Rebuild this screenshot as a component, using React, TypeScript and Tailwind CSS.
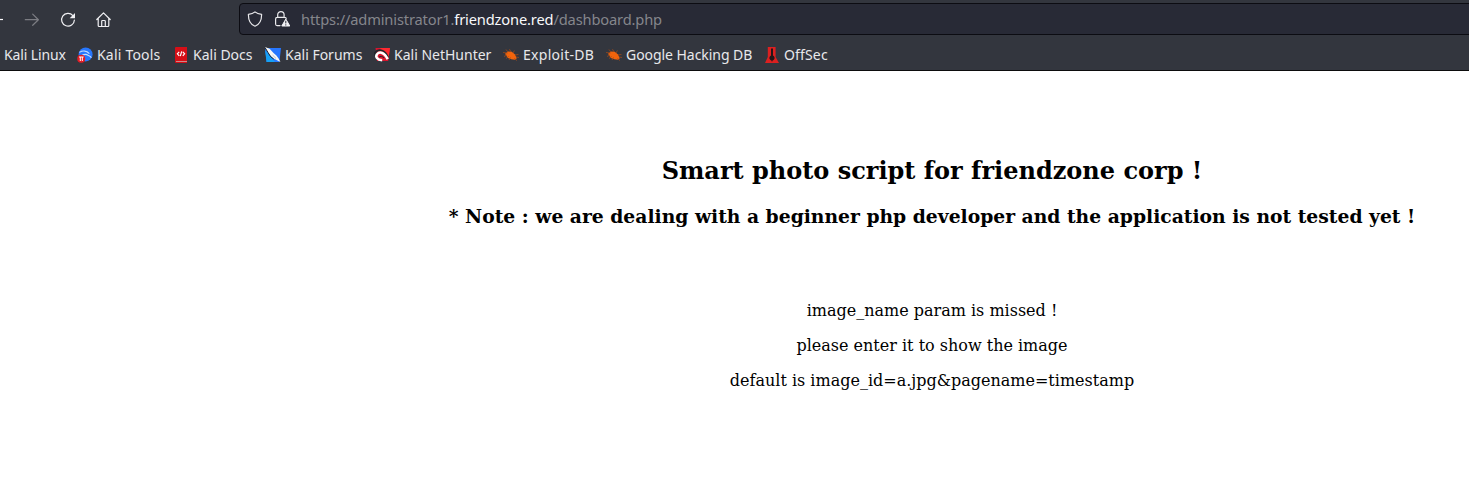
import type { ReactNode } from "react";

function ToolsIcon() {
  return (
    <svg width="16" height="16" viewBox="0 0 16 16">
      <circle cx="8.6" cy="7.4" r="7" fill="#2777ff" />
      <path d="M2.4 5.4C5.5 3.4 9.6 3.6 12.4 6.6M5 8.2c2.4-1 4.6-1 6 0 1.6.6 2.8 1.4 3.4 2.6" fill="none" stroke="#c4dcff" strokeWidth="1.1" />
      <circle cx="4.2" cy="11.8" r="4" fill="#e31c25" />
      <path d="M2 10h4.6M3.3 10v4M5.3 10v4" stroke="#fff" strokeWidth="1" />
    </svg>
  );
}

function DocsIcon() {
  return (
    <svg width="16" height="16" viewBox="0 0 16 16">
      <path d="M2 1Q2 0 3 0H14v16H3Q2 16 2 15Z" fill="#d60f17" />
      <path d="M3 14.5h11" stroke="#c98a8a" strokeWidth="1" />
      <path d="M6.2 4.8 4.4 6.8l1.8 2M9.8 4.8l1.8 2-1.8 2M8.7 4.4 7.3 9.2" fill="none" stroke="#fff" strokeWidth="1.2" />
    </svg>
  );
}

function ForumsIcon() {
  return (
    <svg width="16" height="16" viewBox="0 0 16 16">
      <path d="M0 1h16l-1.6 14H1.6Z" fill="#2777ff" />
      <path d="M0 3 10 15H1.6Z" fill="#16a0f4" />
      <path d="M0 0 4.6 1.8 8.8 6.3l2.6 2.1 2.2 3 1.9 3.6-4-2.1-3.8-1.8-2.9-3L1.8 4Z" fill="#f7f7f5" />
      <path d="m0 .5 3 5 2.5 4 3.2 2.5" fill="none" stroke="#17202d" strokeWidth="1" />
      <path d="m7.5 8 3.5 3.4" stroke="#9ca7b8" strokeWidth=".7" />
    </svg>
  );
}

function NetHunterIcon() {
  return (
    <svg width="16" height="16" viewBox="0 0 16 16">
      <path d="M1.5 1H16l-1.8 13H3Z" fill="#d6162f" />
      <path d="M6 1h10l-1.7 11Z" fill="#ff2930" />
      <path d="M0 8.5C1 4 4.5 2.3 8 3.5c2.8 1 4.7 3.4 6 6.6" fill="none" stroke="#20262c" strokeWidth="1.8" />
      <path d="M8.2 13.2C3 12.9 1.2 9.6 3 7.2 5.4 4.4 10.6 5 13.6 12.2" fill="none" stroke="#fff" strokeWidth="2.5" />
      <path d="M5 10.2c1-1.4 3.7-1 5 .8" fill="none" stroke="#20262c" strokeWidth="1" />
    </svg>
  );
}

function ExploitIcon() {
  return (
    <svg width="16" height="16" viewBox="0 0 16 16">
      <path d="M2 6.8 5 4.4l3.8.4 3.2 2.6 1.8 3.8-1.8 1.6-3.7-.6-3.4-1.2Z" fill="#f2640c" />
      <path d="M4.5 6 0 5.5m4 2.5L1 9.5m4.6 0L3 11.5m4.5-1L6 13M5 5 3 2.5M8 5 6.5 2.2M10 6l1.4-2.5M12 8l3.5-.6M13 10l3 .5M11.5 11.5 14 13.6" fill="none" stroke="#9c491b" strokeWidth=".8" />
    </svg>
  );
}

function OffSecIcon() {
  return (
    <svg width="16" height="16" viewBox="0 0 16 16">
      <path d="M3.8 0h7.8v10L15 16H1l2.8-6Z" fill="#dc2020" />
      <path d="M7 1.5h2v7a2.6 2.6 0 1 1-2 0Z" fill="#241719" />
      <path d="M8 11v3.4" stroke="#241719" strokeWidth="1" />
    </svg>
  );
}

const bookmarks: { label: string; icon: ReactNode; layout: string }[] = [
  { label: "Kali Tools", icon: <ToolsIcon />, layout: "w-[96px] tracking-[0.2px]" },
  { label: "Kali Docs", icon: <DocsIcon />, layout: "w-[92px]" },
  { label: "Kali Forums", icon: <ForumsIcon />, layout: "w-[109px]" },
  { label: "Kali NetHunter", icon: <NetHunterIcon />, layout: "w-[129px]" },
  { label: "Exploit-DB", icon: <ExploitIcon />, layout: "w-[103px] tracking-[0.28px]" },
  { label: "Google Hacking DB", icon: <ExploitIcon />, layout: "w-[158px] tracking-[-0.05px]" },
  { label: "OffSec", icon: <OffSecIcon />, layout: "w-[80px] tracking-[0.15px]" },
];

function NavigationBar() {
  return (
    <div className="flex h-[39px] pt-[3px]">
      <div className="flex w-[239px] shrink-0 pt-[9px]">
        <svg width="4" height="16" viewBox="0 0 4 16">
          <path d="M0 7.5h3" stroke="#fbfbfe" strokeWidth="1.2" />
        </svg>
        <svg className="ml-5" width="16" height="16" viewBox="0 0 16 16" fill="none" stroke="#7c7d83" strokeWidth="1.2" strokeLinecap="round" strokeLinejoin="round">
          <path d="M1.3 7.7h13M8.7 2.1l5.7 5.6-5.7 5.6" />
        </svg>
        <svg className="ml-5" width="16" height="16" viewBox="0 0 16 16">
          <path d="M12.9 3.6A6.4 6.4 0 1 0 14.4 8" fill="none" stroke="#f0f0f3" strokeWidth="1.2" strokeLinecap="round" />
          <path d="M15 1v5.2H9.7Z" fill="#f0f0f3" />
        </svg>
        <svg className="ml-5" width="16" height="16" viewBox="0 0 16 16" fill="none" stroke="#f0f0f3" strokeWidth="1.2" strokeLinecap="round" strokeLinejoin="round">
          <path d="M.8 7.5 7.5.8l6.7 6.7M2.2 6.5v7.1q0 .9.9.9h8.8q.9 0 .9-.9V6.5M5.7 14.4V9.3q0-.8.8-.8h2q.8 0 .8.8v5.1" />
        </svg>
      </div>
      <div className="flex h-8 w-[1300px] shrink-0 items-center rounded-[4px] border border-[#0c0c12] bg-[#282a36] pl-[7px]">
        <svg width="16" height="16" viewBox="0 0 16 16">
          <path d="M8 .9c1.8 1.5 4 2.1 6.6 2.4C14.7 8.9 12.8 13.4 8 15.2 3.2 13.4 1.3 8.9 1.4 3.3 4 3 6.2 2.4 8 .9Z" fill="none" stroke="#e9e9ec" strokeWidth="1.2" strokeLinejoin="round" />
        </svg>
        <svg className="ml-3" width="16" height="16" viewBox="0 0 16 16">
          <path d="M2.7 6.4V3.8a3.2 3.2 0 0 1 6.4 0v2.6M5 14.6H2.1Q.6 14.6.6 13.1V8q0-1.6 1.6-1.6h7.4Q11.2 6.4 11.2 7.6" fill="none" stroke="#e9e9ec" strokeWidth="1.2" strokeLinecap="round" />
          <path d="M10.8 8.1 14.8 15H6.8Z" fill="#f3f3f6" stroke="#f3f3f6" strokeLinejoin="round" />
          <path d="M10.8 9.8v2.6m0 .9v1.2" stroke="#282a36" strokeWidth="1" />
        </svg>
        <span className="ml-[10px] whitespace-pre text-[14.67px] leading-5 tracking-[-0.155px] text-[#85868c]">
          https://administrator1.<span className="text-[#f8f8fb]">friendzone.red</span>/dashboard.php
        </span>
      </div>
    </div>
  );
}

export default function App() {
  return (
    <div className="h-[486px] w-full overflow-hidden bg-white">
      <header className="h-[71px] border-b border-[#0c0c0d] bg-[#33363e] font-['Noto_Sans',sans-serif]">
        <NavigationBar />
        <nav className="flex h-[31px] items-center whitespace-nowrap text-[14px] leading-5 text-[#e8e8eb]">
          <a className="w-[77px] shrink-0 pl-1 tracking-[-0.13px]">Kali Linux</a>
          {bookmarks.map(({ label, icon, layout }) => (
            <a key={label} className={`flex shrink-0 items-center gap-1 ${layout}`}>
              {icon}
              {label}
            </a>
          ))}
        </nav>
      </header>
      <main className="w-[1864px] pt-[86px] text-center font-['DejaVu_Serif',serif] text-black">
        <h2 className="text-[24px] font-bold leading-[28px]">Smart photo script for friendzone corp !</h2>
        <h3 className="mt-5 text-[18.74px] font-bold leading-[22px]">* Note : we are dealing with a beginner php developer and the application is not tested yet !</h3>
        <div className="mt-[74px] flex flex-col gap-4 text-[16px] leading-[19px]">
          <p>image_name param is missed !</p>
          <p>please enter it to show the image</p>
          <p>default is image_id=a.jpg&amp;pagename=timestamp</p>
        </div>
      </main>
    </div>
  );
}
